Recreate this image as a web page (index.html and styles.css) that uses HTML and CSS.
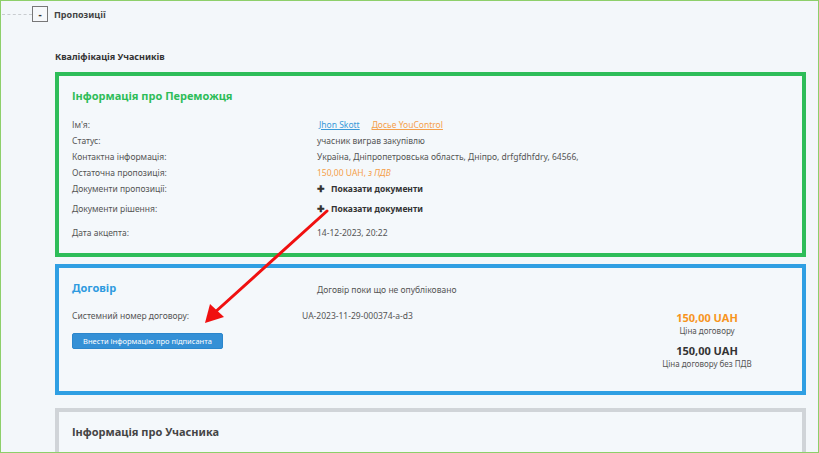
FILE: index.html
```html
<!DOCTYPE html>
<html lang="uk">
<head>
<meta charset="utf-8">
<link rel="stylesheet" href="styles.css">
</head>
<body>
<div class="page">
  <div class="tree-row">
    <span class="tree-line"></span>
    <span class="toggle">-</span>
    <span class="tree-title">Пропозиції</span>
  </div>
  <div class="content">
    <div class="section-title">Кваліфікація Учасників</div>

    <div class="box box-green">
      <h2 class="box-title green">Інформація про Переможця</h2>
      <div class="rows">
        <div class="row"><span class="lbl">Ім'я:</span><span class="val"><a class="link blue-link">Jhon Skott</a><a class="link orange-link">Досье YouControl</a></span></div>
        <div class="row"><span class="lbl">Статус:</span><span class="val">учасник виграв закупівлю</span></div>
        <div class="row"><span class="lbl">Контактна інформація:</span><span class="val">Україна, Дніпропетровська область, Дніпро, drfgfdhfdry, 64566,</span></div>
        <div class="row"><span class="lbl">Остаточна пропозиція:</span><span class="val orange">150,00 UAH, <i>з ПДВ</i></span></div>
        <div class="row"><span class="lbl">Документи пропозиції:</span><span class="val docs"><span class="plus">✚</span>Показати документи</span></div>
        <div class="row row-doc2"><span class="lbl">Документи рішення:</span><span class="val docs"><span class="plus">✚</span>Показати документи</span></div>
        <div class="row row-date"><span class="lbl">Дата акцепта:</span><span class="val">14-12-2023, 20:22</span></div>
      </div>
    </div>

    <div class="box box-blue">
      <div class="contract-top">
        <h2 class="box-title blue contract-title">Договір</h2>
        <span class="contract-status">Договір поки що не опубліковано</span>
      </div>
      <div class="contract-body">
        <div class="contract-left">
          <div class="row"><span class="lbl lbl-short">Системний номер договору:</span><span class="val">UA-2023-11-29-000374-a-d3</span></div>
          <button class="btn">Внести інформацію про підписанта</button>
        </div>
        <div class="prices">
          <div class="price orange-strong">150,00 UAH</div>
          <div class="price-lbl">Ціна договору</div>
          <div class="price dark">150,00 UAH</div>
          <div class="price-lbl">Ціна договору без ПДВ</div>
        </div>
      </div>
    </div>

    <div class="box box-grey">
      <h2 class="box-title grey">Інформація про Учасника</h2>
    </div>
  </div>

  <svg class="arrow" width="819" height="453" viewBox="0 0 819 453">
    <line x1="327" y1="211" x2="213" y2="314" stroke="#f01010" stroke-width="3" stroke-linecap="round"/>
    <polygon points="205,323 210,304 224,317" fill="#f01010"/>
  </svg>
</div>
</body>
</html>
```

FILE: styles.css
```css
* { box-sizing: border-box; }
html, body { margin: 0; padding: 0; }
body {
  font-family: "Noto Sans", "Liberation Sans", sans-serif;
  color: #444;
  background: #f3f7fa;
}
.page {
  position: relative;
  width: 819px;
  height: 453px;
  overflow: hidden;
  border: 1px solid #8dcf6a;
  background: #f3f7fa;
}
.tree-row {
  display: flex;
  align-items: center;
  height: 16px;
  margin-top: 5px;
}
.tree-line {
  width: 30px;
  border-top: 1px dashed #c8cccf;
  margin-left: 1px;
}
.toggle {
  width: 16px;
  height: 16px;
  border: 1px solid #777;
  display: flex;
  align-items: center;
  justify-content: center;
  font-size: 10px;
  font-weight: 700;
  color: #333;
  line-height: 1;
  background: #f6f8fa;
}
.tree-title {
  margin-left: 6px;
  font-size: 9px;
  font-weight: 700;
  color: #444;
}
.content {
  padding: 0 12px 0 54px;
}
.section-title {
  margin-top: 29px;
  font-size: 9px;
  line-height: 12px;
  font-weight: 700;
  color: #333;
  height: 12px;
}
.box {
  border: 4px solid;
  background: #f4f8fb;
}
.box-green {
  border-color: #2ebd59;
  margin-top: 9px;
  padding: 12px 13px 12px 13px;
}
.box-blue {
  border-color: #2f9fe3;
  margin-top: 7px;
  padding: 12px 20px 21px 13px;
}
.box-grey {
  border-color: #d0d4d8;
  margin-top: 13px;
  padding: 12px 13px 40px 13px;
}
.box-title {
  margin: 0;
  font-size: 11px;
  line-height: 16px;
  font-weight: 700;
}
.green { color: #2ebd59; }
.blue { color: #2f9be0; }
.grey { color: #454545; }
.rows { margin-top: 13px; }
.row {
  display: flex;
  font-size: 8.5px;
  line-height: 16px;
  height: 16px;
  color: #555;
}
.lbl { width: 245px; flex-shrink: 0; }
.lbl-short { width: 230px; }
.val { color: #555; }
.row-doc2 { margin-top: 4px; }
.row-date { margin-top: 8px; }
.link { text-decoration: underline; cursor: pointer; }
.blue-link { color: #3a9ad9; margin-left: 2px; margin-right: 12px; }
.orange-link { color: #f5a04a; }
.orange { color: #f5a04a; }
.docs { font-weight: 700; color: #333; }
.plus { font-size: 9px; margin-right: 6px; color: #333; }
.contract-top { display: flex; align-items: center; }
.contract-title { width: 245px; }
.contract-status { font-size: 8.5px; color: #555; margin-top: 3px; }
.contract-body { display: flex; margin-top: 12px; }
.contract-left { flex: 1; }
.btn {
  display: block;
  margin-top: 9px;
  width: 151px;
  height: 16px;
  padding: 0;
  border: 1px solid #2b86cc;
  border-radius: 2px;
  background: #3490d6;
  color: #fff;
  font-family: inherit;
  font-size: 7.5px;
  line-height: 14px;
}
.prices {
  width: 150px;
  text-align: center;
  margin-top: 3px;
}
.price {
  font-size: 11px;
  font-weight: 700;
  line-height: 14px;
}
.orange-strong { color: #f7941d; }
.dark { color: #333; margin-top: 7px; }
.price-lbl { font-size: 8px; line-height: 12px; color: #555; }
.arrow {
  position: absolute;
  left: -1px;
  top: -1px;
  pointer-events: none;
}
```
